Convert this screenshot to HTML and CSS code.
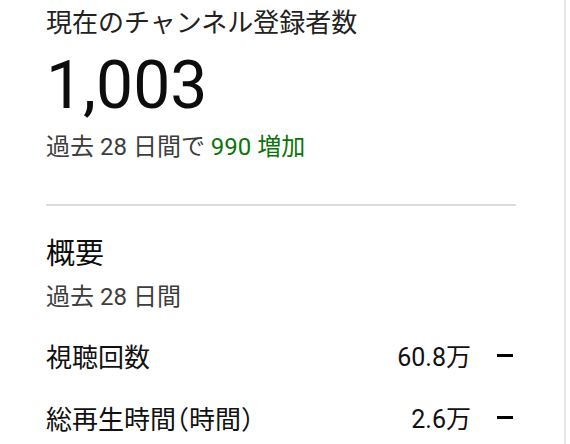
FILE: index.html
```html
<!DOCTYPE html>
<html lang="ja">
<head>
<meta charset="utf-8">
<link rel="stylesheet" href="styles.css">
</head>
<body>
<div class="page">
  <div class="card">
    <section class="subs">
      <div class="subs-title">現在のチャンネル登録者数</div>
      <div class="subs-count">1,003</div>
      <div class="subs-delta">過去 28 日間で <span class="up">990 増加</span></div>
    </section>
    <hr class="divider">
    <section class="summary">
      <div class="summary-title">概要</div>
      <div class="summary-period">過去 28 日間</div>
      <div class="metric">
        <span class="metric-label">視聴回数</span>
        <span class="metric-value">60.8万</span>
        <span class="metric-trend"></span>
      </div>
      <div class="metric">
        <span class="metric-label">総再生時間（時間）</span>
        <span class="metric-value">2.6万</span>
        <span class="metric-trend"></span>
      </div>
    </section>
  </div>
</div>
</body>
</html>
```

FILE: styles.css
```css
html, body {
  margin: 0;
  padding: 0;
  background: #fff;
}
body {
  font-family: Roboto, "Noto Sans CJK JP", sans-serif;
  color: #0d0d0d;
}
.page {
  width: 564px;
  height: 444px;
  border-right: 2px solid #e6e6e6;
  overflow: hidden;
}
.card {
  padding: 0 48px 0 46px;
}
.subs-title {
  font-size: 26px;
  line-height: 32px;
  margin-top: 7px;
  color: #222;
}
.subs-count {
  font-size: 66px;
  line-height: 72px;
  margin-top: 11px;
  color: #0d0d0d;
}
.subs-delta {
  font-size: 24px;
  line-height: 30px;
  margin-top: 10px;
  color: #3d3d3d;
}
.up {
  color: #0b740b;
}
.divider {
  border: 0;
  height: 2px;
  background: #dcdcdc;
  margin: 42px 0 0;
}
.summary-title {
  font-size: 29px;
  line-height: 36px;
  margin-top: 30px;
  color: #0d0d0d;
}
.summary-period {
  font-size: 24px;
  line-height: 30px;
  margin-top: 10px;
  color: #3d3d3d;
}
.metric {
  display: flex;
  align-items: center;
  height: 62px;
  margin-top: 12px;
  font-size: 25px;
  color: #111;
}
.metric + .metric {
  margin-top: 0;
}
.metric-label {
  flex: 1;
  font-size: 26px;
  font-feature-settings: "halt";
}
.metric-value {
  text-align: right;
}
.metric-trend {
  width: 16px;
  height: 3px;
  background: #000;
  margin-left: 26px;
  margin-right: 3px;
}
```
